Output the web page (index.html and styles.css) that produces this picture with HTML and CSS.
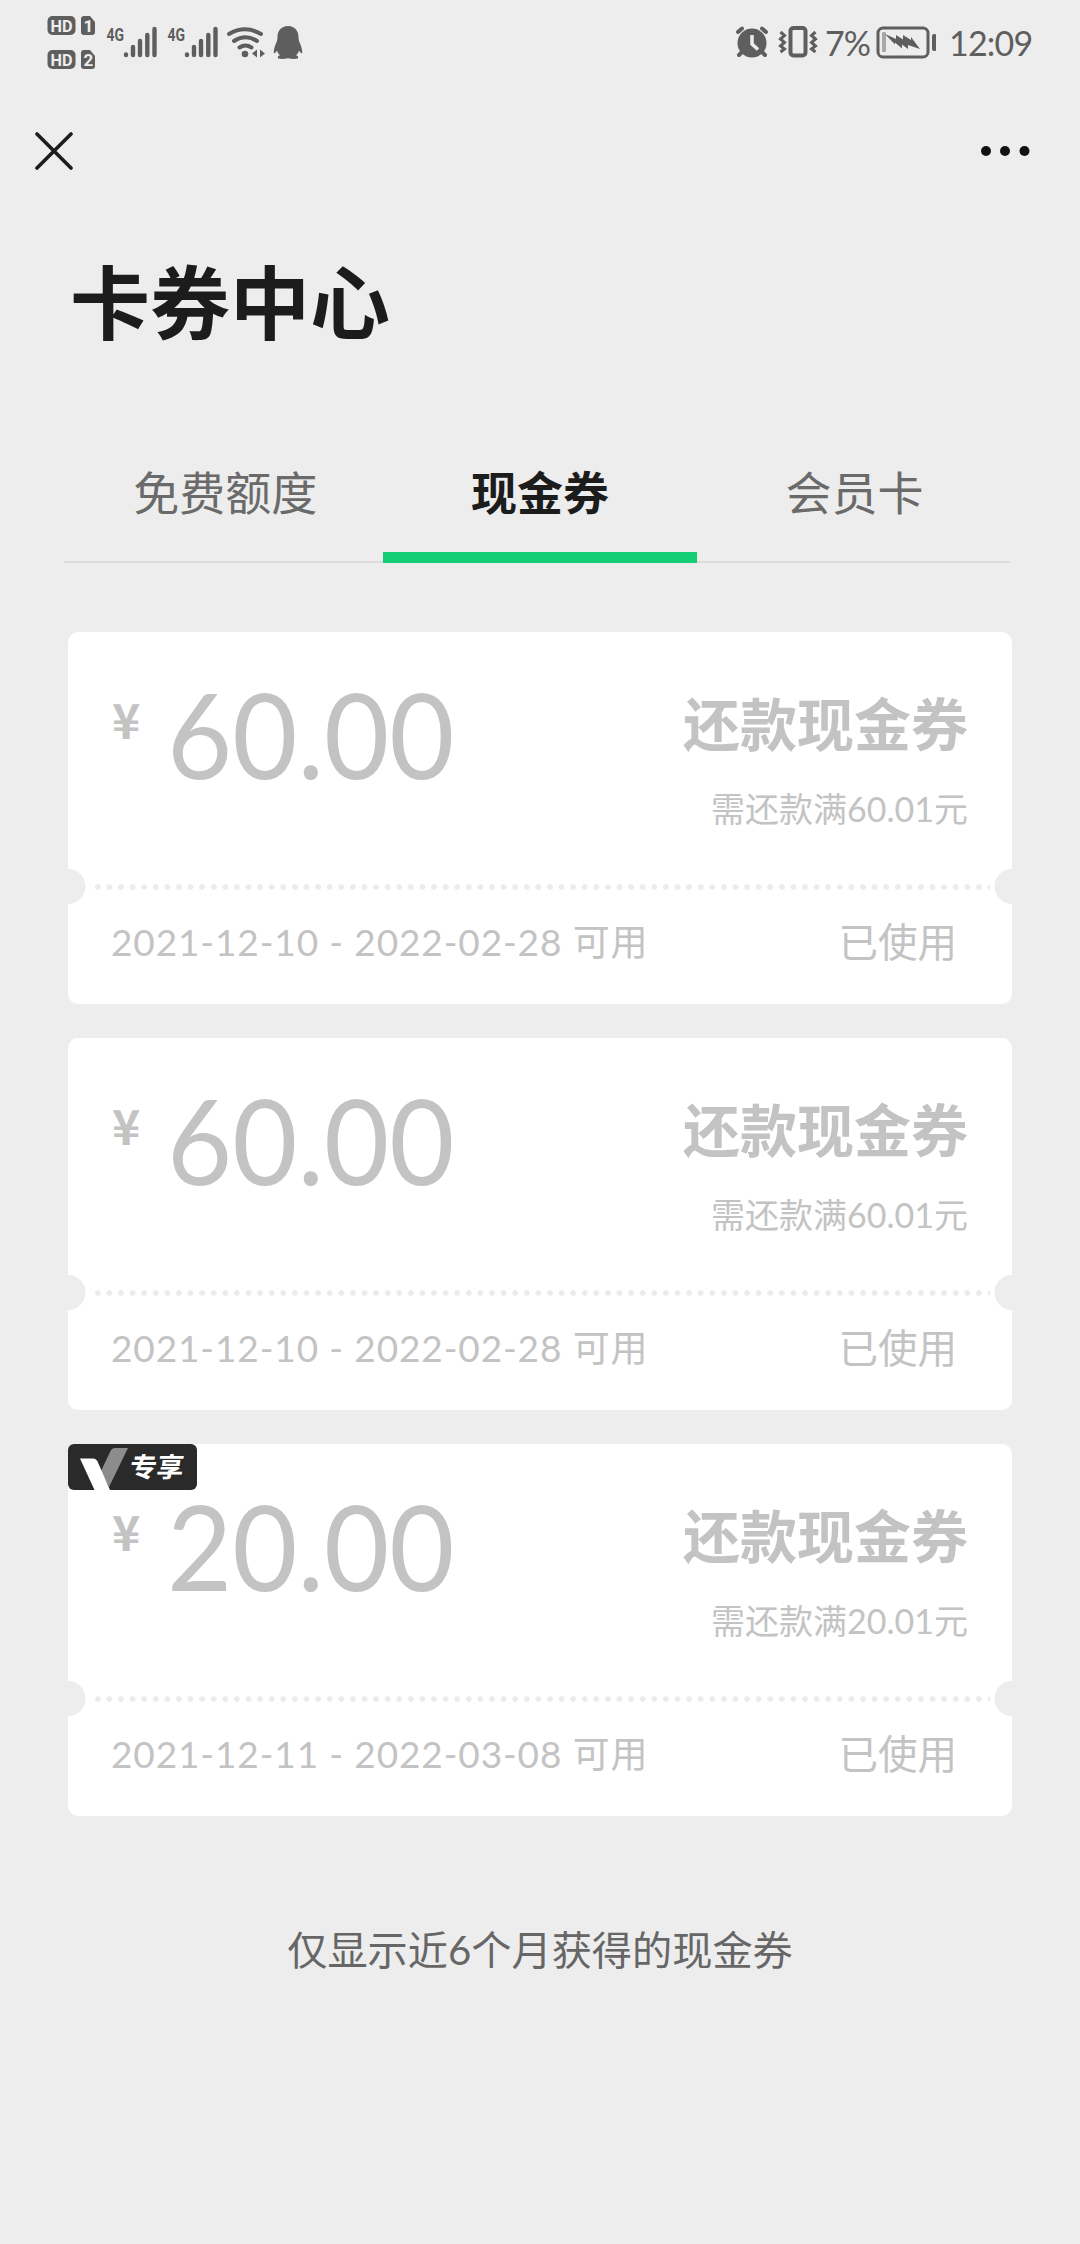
FILE: index.html
```html
<!DOCTYPE html>
<html lang="zh-CN">
<head>
    <meta charset="UTF-8">
    <meta name="viewport" content="width=device-width, initial-scale=1.0">
    <title>卡券中心</title>
    <link rel="stylesheet" href="styles.css">
</head>
<body>
    <div class="status-bar">
        <div class="status-left">
            <!-- HD 1 / HD 2 -->
            <svg class="icon-hd" width="50" height="90" viewBox="46 0 50 90">
                <rect x="47.5" y="16" width="28" height="19" rx="5"/>
                <text class="hd-text" x="50.5" y="31.5" textLength="22" lengthAdjust="spacingAndGlyphs">HD</text>
                <path d="M84 16h6l5 6v10a3 3 0 0 1-3 3h-8a3 3 0 0 1-3-3V19a3 3 0 0 1 3-3z"/>
                <text class="hd-text" x="83.5" y="32">1</text>
                <rect x="47.5" y="50" width="28" height="19" rx="5"/>
                <text class="hd-text" x="50.5" y="65.5" textLength="22" lengthAdjust="spacingAndGlyphs">HD</text>
                <path d="M84 50h6l5 6v10a3 3 0 0 1-3 3h-8a3 3 0 0 1-3-3V53a3 3 0 0 1 3-3z"/>
                <text class="hd-text" x="83.5" y="66">2</text>
            </svg>
            <svg class="icon-signal" width="52" height="90" viewBox="106 0 52 90">
                <text class="net-text" x="106.5" y="40.5" textLength="17.5" lengthAdjust="spacingAndGlyphs">4G</text>
                <path class="bars" d="M126 54.5v.5M133 47v8M140 41v14M147.3 35v20M154.5 29v26"/>
            </svg>
            <svg class="icon-signal" width="52" height="90" viewBox="106 0 52 90">
                <text class="net-text" x="106.5" y="40.5" textLength="17.5" lengthAdjust="spacingAndGlyphs">4G</text>
                <path class="bars" d="M126 54.5v.5M133 47v8M140 41v14M147.3 35v20M154.5 29v26"/>
            </svg>
            <svg class="icon-wifi" width="40" height="90" viewBox="226 0 40 90">
                <path class="waves" d="M229 34q16-9.500 32 0M234 41q11.500-7.500 23 0M239.500 47.500q6-4 12 0"/>
                <circle cx="245" cy="54" r="3.300"/>
                <path d="M252 53.500l5-4v8zM265 53.500l-5-4v8z"/>
            </svg>
            <svg class="icon-qq" width="30" height="90" viewBox="273 0 30 90">
                <path d="M288 26c7 0 10.500 5 10.500 11 0 2.500.5 4 1.500 6.500 1.500 3.500 2.500 7 2.200 9.500-.7 1-2-.5-3.200-2.500-.5 2-1.500 3.500-3 4.800 2 .7 2.500 1.500 2 3.200-3 .8-7 .5-10-.3-3 .8-7 1.100-10 .3-.5-1.700 0-2.500 2-3.200-1.500-1.300-2.500-2.800-3-4.800-1.200 2-2.500 3.500-3.200 2.500-.3-2.500.7-6 2.200-9.500 1-2.500 1.500-4 1.500-6.500C277.500 31 281 26 288 26z"/>
            </svg>
        </div>
        <div class="status-right">
            <svg class="icon-alarm" width="34" height="90" viewBox="735 0 34 90">
                <circle cx="752" cy="43" r="14.500"/>
                <path class="alarm-ears" d="M738 32l4-3.500M766 32l-4-3.500M742 52l-3 3M762 52l3 3"/>
                <path class="alarm-hands" d="M752 35v9l6 5.500"/>
            </svg>
            <svg class="icon-vibrate" width="40" height="90" viewBox="778 0 40 90">
                <rect x="790.500" y="28" width="15" height="27.500" rx="3"/>
                <path class="wiggle" d="M780.500 32l4 3.500-4 3.500 4 3.500-4 3.500 4 3-4 3M815.500 32l-4 3.500 4 3.500-4 3.500 4 3.500-4 3 4 3"/>
            </svg>
            <span class="battery-level">7%</span>
            <svg class="icon-battery" width="60" height="90" viewBox="876 0 60 90">
                <rect class="battery-case" x="878" y="28" width="50" height="29" rx="5"/>
                <rect class="battery-fill" x="882" y="32" width="4" height="20" rx="1"/>
                <path d="M885 34l11 5v-4l7 4.500v-4.500l8 5v-3l9 12-12-4v4l-6-4.500v4l-7-6v2z"/>
                <rect x="932" y="34" width="4.500" height="17" rx="2"/>
            </svg>
            <span class="clock">12:09</span>
        </div>
    </div>

    <div class="nav-bar">
        <svg class="close" width="38" height="38" viewBox="0 0 38 38">
            <path d="M2 2l34 34M36 2L2 36"/>
        </svg>
        <svg class="more" width="50" height="12" viewBox="0 0 50 12">
            <circle cx="6" cy="6" r="5"/>
            <circle cx="25" cy="6" r="5"/>
            <circle cx="44.500" cy="6" r="5"/>
        </svg>
    </div>

    <h1 class="page-title">卡券中心</h1>

    <div class="tabs">
        <div class="tab">免费额度</div>
        <div class="tab active">现金券</div>
        <div class="tab">会员卡</div>
    </div>

    <div class="coupon-list">
        <div class="coupon">
            <div class="coupon-main">
                <div class="price"><span class="currency">¥</span><span class="amount">60.00</span></div>
                <div class="info">
                    <div class="name">还款现金券</div>
                    <div class="condition">需还款满60.01元</div>
                </div>
            </div>
            <div class="divider"></div>
            <div class="coupon-foot">
                <span class="date">2021-12-10 - 2022-02-28 可用</span>
                <span class="state">已使用</span>
            </div>
        </div>

        <div class="coupon">
            <div class="coupon-main">
                <div class="price"><span class="currency">¥</span><span class="amount">60.00</span></div>
                <div class="info">
                    <div class="name">还款现金券</div>
                    <div class="condition">需还款满60.01元</div>
                </div>
            </div>
            <div class="divider"></div>
            <div class="coupon-foot">
                <span class="date">2021-12-10 - 2022-02-28 可用</span>
                <span class="state">已使用</span>
            </div>
        </div>

        <div class="coupon">
            <div class="badge">
                <svg class="badge-v" width="62" height="46" viewBox="0 0 62 46">
                    <path class="v-back" d="M60 4H47q-3 0-4.500 3L33 27l8 16z"/>
                    <path class="v-front" d="M12 14.500h13q3 0 4.500 3L42 46H26.500z"/>
                </svg>
                <span class="badge-text">专享</span>
            </div>
            <div class="coupon-main">
                <div class="price"><span class="currency">¥</span><span class="amount">20.00</span></div>
                <div class="info">
                    <div class="name">还款现金券</div>
                    <div class="condition">需还款满20.01元</div>
                </div>
            </div>
            <div class="divider"></div>
            <div class="coupon-foot">
                <span class="date">2021-12-11 - 2022-03-08 可用</span>
                <span class="state">已使用</span>
            </div>
        </div>
    </div>

    <p class="tip">仅显示近6个月获得的现金券</p>
</body>
</html>
```
FILE: styles.css
```css
* {
    box-sizing: border-box;
}
body {
    margin: 0;
    min-height: 2244px;
    background-color: #ededed;
    font-family: Lato, "Noto Sans CJK SC", sans-serif;
    color: #1c1c1c;
}
svg {
    display: block;
    flex: none;
}

/* status bar */
.status-bar {
    display: flex;
    justify-content: space-between;
    height: 90px;
    padding: 0 48px 0 46px;
    color: #5e5e5e;
    fill: #5e5e5e;
}
.status-left, .status-right {
    display: flex;
    align-items: center;
}
.hd-text {
    font: bold 17px Roboto, sans-serif;
    fill: #ededed;
}
.net-text {
    font: bold 19px Roboto, sans-serif;
}
.bars {
    fill: none;
    stroke: #5e5e5e;
    stroke-width: 4.4px;
    stroke-linecap: round;
}
.icon-signal {
    margin-left: 10px;
}
.icon-signal + .icon-signal {
    margin-left: 9px;
}
.icon-wifi {
    margin-left: 7px;
}
.waves {
    fill: none;
    stroke: #5e5e5e;
    stroke-width: 4px;
    stroke-linecap: round;
}
.icon-qq {
    margin-left: 7px;
}
.alarm-ears {
    stroke: #5e5e5e;
    stroke-width: 4px;
    stroke-linecap: round;
}
.alarm-hands {
    fill: none;
    stroke: #ededed;
    stroke-width: 3.5px;
}
.icon-vibrate {
    margin-left: 9px;
    fill: none;
    stroke: #5e5e5e;
    stroke-width: 4px;
}
.wiggle {
    stroke-width: 3px;
}
.battery-level, .clock {
    height: 90px;
    font-size: 34px;
    line-height: 86px;
    white-space: nowrap;
}
.battery-level {
    width: 50px;
    margin-left: 7px;
    letter-spacing: -1px;
}
.battery-case {
    fill: none;
    stroke: #5e5e5e;
    stroke-width: 3px;
}
.battery-fill {
    fill: #a8a8a8;
}
.icon-battery {
    margin-left: 1px;
}
.clock {
    width: 83px;
    margin-left: 13px;
    letter-spacing: -0.8px;
}

/* nav bar */
.nav-bar {
    display: flex;
    align-items: center;
    justify-content: space-between;
    height: 121px;
    padding: 0 50px 0 35px;
}
.close {
    fill: none;
    stroke: #1c1c1c;
    stroke-width: 3.6px;
    stroke-linecap: round;
}
.more {
    fill: #111;
}

.page-title {
    margin: 31px 0 0 70px;
    font-size: 80px;
    line-height: 120px;
    font-weight: bold;
}

/* tabs */
.tabs {
    display: grid;
    grid-template-columns: repeat(3, 314.6px);
    width: 946px;
    height: 131px;
    margin: 70px 0 0 64px;
    padding-left: 4px;
    background: linear-gradient(#dcdcdc, #dcdcdc) left bottom / 100% 2px no-repeat;
}
.tab {
    padding-top: 26px;
    text-align: center;
    font-size: 46px;
    line-height: 70px;
    color: #6a6a6a;
}
.tab.active {
    border-bottom: 11px solid #14ce75;
    font-weight: bold;
    color: #1c1c1c;
}

/* coupons */
.coupon-list {
    display: flex;
    flex-direction: column;
    gap: 34px;
    padding: 69px 68px 0;
}
.coupon {
    position: relative;
    height: 372px;
    border-radius: 10px;
    background: radial-gradient(circle at 0 254.5px, #ededed 17px, transparent 18px),
        radial-gradient(circle at 100% 254.5px, #ededed 17px, transparent 18px),
        #fff;
    color: #c3c3c3;
}
.coupon-main {
    display: flex;
    justify-content: space-between;
    height: 251px;
    padding: 40px 44px 0 44px;
}
.price {
    display: flex;
    align-items: flex-start;
}
.currency {
    width: 55px;
    padding-top: 16px;
    font-family: "Noto Sans CJK SC", sans-serif;
    font-size: 48px;
    line-height: 60px;
    font-weight: bold;
}
.amount {
    font-size: 119px;
    line-height: 122px;
    transform: scaleX(0.945);
    transform-origin: left;
}
.info {
    padding-top: 7px;
    text-align: right;
}
.name {
    font-size: 57px;
    line-height: 90px;
    font-weight: bold;
}
.condition {
    padding-top: 15px;
    font-size: 34px;
    line-height: 50px;
}
.divider {
    height: 6px;
    margin: 1px 22px 0 24px;
    background: radial-gradient(circle, #ebebeb 2.4px, transparent 3.2px) left center / 11.6px 6px repeat-x;
}
.coupon-foot {
    display: flex;
    justify-content: space-between;
    align-items: center;
    height: 104px;
    padding: 0 55px 0 43px;
    line-height: 60px;
}
.date {
    font-size: 37px;
    letter-spacing: 0.88px;
}
.state {
    font-size: 39.5px;
}

/* member badge */
.badge {
    position: absolute;
    left: 0;
    top: 0;
    display: flex;
    align-items: center;
    width: 129px;
    height: 46px;
    border-radius: 6px;
    background-color: #2a2a2a;
    color: #fff;
}
.v-back {
    fill: #8c8c8c;
}
.v-front {
    fill: #fff;
}
.badge-text {
    font-size: 27px;
    line-height: 48px;
    font-weight: bold;
    transform: skewX(-8deg);
}

.tip {
    margin: 104px 0 0;
    text-align: center;
    font-size: 40.2px;
    line-height: 60px;
    color: #666;
}
```
